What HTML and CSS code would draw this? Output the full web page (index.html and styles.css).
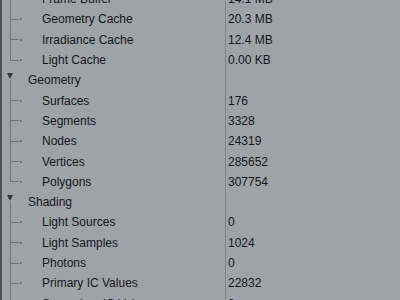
FILE: index.html
```html
<!DOCTYPE html>
<html lang="en">
<head>
    <meta charset="UTF-8">
    <title>Render statistics</title>
    <link rel="stylesheet" href="styles.css">
</head>
<body>
<div class="panel">
    <div class="row"><div class="name"><span class="branch"></span><span class="dot"></span>Frame Buffer</div><div class="value">14.1 MB</div></div>
    <div class="row"><div class="name"><span class="branch"></span><span class="dot"></span>Geometry Cache</div><div class="value">20.3 MB</div></div>
    <div class="row"><div class="name"><span class="branch"></span><span class="dot"></span>Irradiance Cache</div><div class="value">12.4 MB</div></div>
    <div class="row"><div class="name"><span class="branch last"></span><span class="dot"></span>Light Cache</div><div class="value">0.00 KB</div></div>

    <div class="row"><div class="name group"><span class="arrow"></span>Geometry</div><div class="value"></div></div>
    <div class="row"><div class="name"><span class="branch"></span><span class="dot"></span>Surfaces</div><div class="value">176</div></div>
    <div class="row"><div class="name"><span class="branch"></span><span class="dot"></span>Segments</div><div class="value">3328</div></div>
    <div class="row"><div class="name"><span class="branch"></span><span class="dot"></span>Nodes</div><div class="value">24319</div></div>
    <div class="row"><div class="name"><span class="branch"></span><span class="dot"></span>Vertices</div><div class="value">285652</div></div>
    <div class="row"><div class="name"><span class="branch last"></span><span class="dot"></span>Polygons</div><div class="value">307754</div></div>

    <div class="row"><div class="name group"><span class="arrow"></span>Shading</div><div class="value"></div></div>
    <div class="row"><div class="name"><span class="branch"></span><span class="dot"></span>Light Sources</div><div class="value">0</div></div>
    <div class="row"><div class="name"><span class="branch"></span><span class="dot"></span>Light Samples</div><div class="value">1024</div></div>
    <div class="row"><div class="name"><span class="branch"></span><span class="dot"></span>Photons</div><div class="value">0</div></div>
    <div class="row"><div class="name"><span class="branch"></span><span class="dot"></span>Primary IC Values</div><div class="value">22832</div></div>
    <div class="row"><div class="name"><span class="branch"></span><span class="dot"></span>Secondary IC Values</div><div class="value">0</div></div>
</div>
</body>
</html>
```
FILE: styles.css
```css
body {
    margin: 0;
    background: #9ea3a8;
    overflow: hidden;
}
.panel {
    margin-top: -11px;
    border-left: 2px solid #4d5156;
    font-family: "Liberation Sans", Arial, sans-serif;
    font-size: 12px;
    color: #15171a;
}
.row {
    display: grid;
    grid-template-columns: 224px 1fr;
    height: 20.3px;
}
.name {
    display: flex;
    align-items: center;
    padding-left: 8px;
    border-right: 1px solid #80858a;
}
.value {
    display: flex;
    align-items: center;
    padding-left: 2px;
}
.branch {
    align-self: stretch;
    width: 8px;
    border-left: 1px solid #6f7478;
    background: linear-gradient(#6f7478, #6f7478) 0 50% / 100% 1px no-repeat;
}
.branch.last {
    border-left: none;
    width: 9px;
    background:
        linear-gradient(#6f7478, #6f7478) 0 0 / 1px 50% no-repeat,
        linear-gradient(#6f7478, #6f7478) 0 50% / 100% 1px no-repeat;
}
.dot {
    width: 2px;
    height: 2px;
    margin-left: 1px;
    margin-right: 20px;
    background: #6f7478;
}
.group {
    padding-left: 5px;
}
.arrow {
    align-self: stretch;
    width: 7px;
    margin-right: 14px;
    background: linear-gradient(#6f7478, #6f7478) 3px 100% / 1px 50% no-repeat;
    position: relative;
}
.arrow::before {
    content: "";
    position: absolute;
    left: 0;
    top: 3px;
    border-left: 3.5px solid transparent;
    border-right: 3.5px solid transparent;
    border-top: 6px solid #34383c;
}
```
